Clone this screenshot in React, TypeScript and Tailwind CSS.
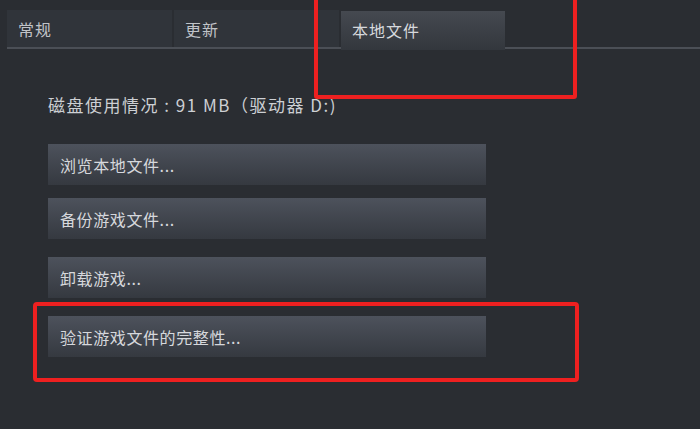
import React from "react";

// ---------------------------------------------------------------------------
// Data
// ---------------------------------------------------------------------------

const tabs = [
  { label: "常规", active: false },
  { label: "更新", active: false },
  { label: "本地文件", active: true },
];

const actions = [
  { label: "浏览本地文件...", className: "mt-0" },
  { label: "备份游戏文件...", className: "mt-[13px]" },
  { label: "卸载游戏...", className: "mt-[18px]" },
  { label: "验证游戏文件的完整性...", className: "mt-[18px]" },
];

const font = {
  fontFamily: '"Noto Sans CJK SC", "Noto Sans", "Liberation Sans", sans-serif',
};

// ---------------------------------------------------------------------------
// App
// ---------------------------------------------------------------------------

export default function App() {
  return (
    <div
      className="relative w-[700px] h-[429px] overflow-hidden bg-[#2a2d32] text-[#c9cbcf]"
      style={font}
    >
      {/* tab strip */}
      <div className="flex gap-[2px] pl-[7px] pt-[10px]">
        {tabs.map((t) =>
          t.active ? (
            <div
              key={t.label}
              className="relative z-10 mt-[1px] -mb-[4px] flex h-[39px] w-[164px] items-start pt-[7px] pl-[11px] bg-gradient-to-b from-[#454950] to-[#33373d] text-[16px] tracking-[1px] text-[#d6d8dc]"
            >
              {t.label}
            </div>
          ) : (
            <div
              key={t.label}
              className="flex h-[37px] w-[165px] items-center pl-[11px] bg-[#30343a] text-[16px] tracking-[1px] text-[#c0c3c8]"
            >
              {t.label}
            </div>
          )
        )}
      </div>
      <div className="ml-[7px] h-[2px] bg-[#4b4f56]" />

      {/* local files panel */}
      <div className="pl-[48px]">
        <p className="mt-[45px] h-[22px] text-[17px] leading-[22px] tracking-[1.5px] text-[#cdd0d4]">
          磁盘使用情况 : 91 MB（驱动器 D:)
        </p>

        <div className="mt-[28px] flex flex-col">
          {actions.map((a) => (
            <button
              key={a.label}
              className={`${a.className} flex h-[41px] w-[438px] items-center pl-[12px] bg-gradient-to-b from-[#4d525c] to-[#353940] text-left text-[16px] tracking-[0.6px] text-[#d6d8dc]`}
            >
              {a.label}
            </button>
          ))}
        </div>
      </div>

      {/* annotation boxes */}
      <div className="absolute left-[314px] top-[-10px] h-[109px] w-[263px] rounded-[3px] border-[4px] border-[#ee2020]" />
      <div className="absolute left-[33px] top-[302px] h-[80px] w-[546px] rounded-[4px] border-[4px] border-[#ee2020]" />
    </div>
  );
}
